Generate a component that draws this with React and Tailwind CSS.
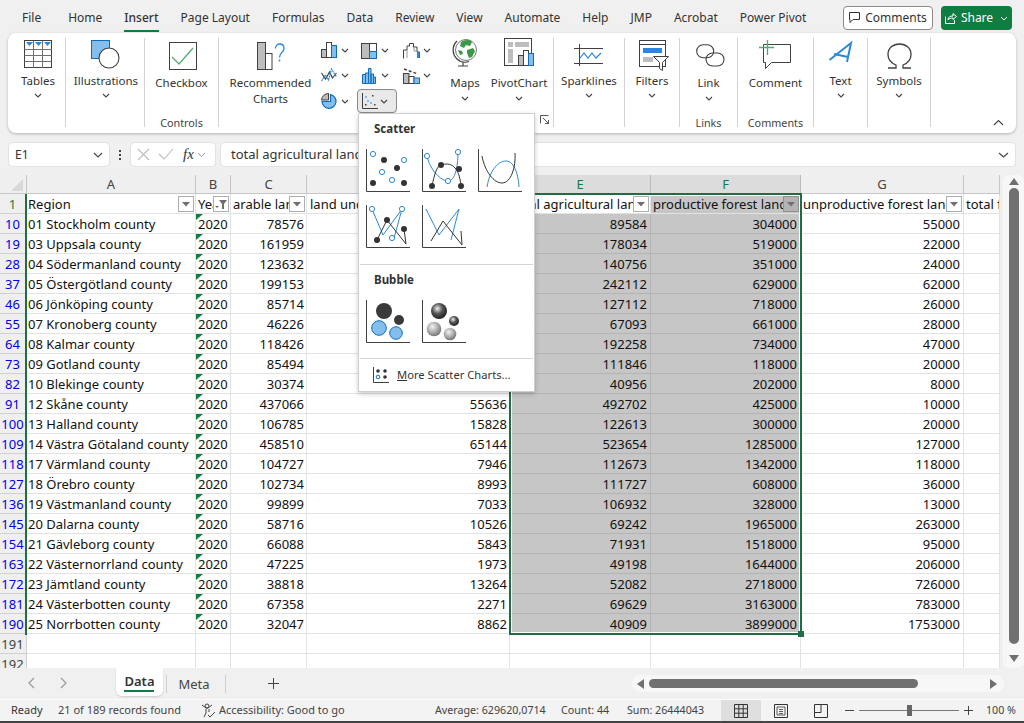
import React from "react";

const rows = [
  [10,"01 Stockholm county",78576,"",89584,304000,55000],
  [19,"03 Uppsala county",161959,"",178034,519000,22000],
  [28,"04 Södermanland county",123632,"",140756,351000,24000],
  [37,"05 Östergötland county",199153,"",242112,629000,62000],
  [46,"06 Jönköping county",85714,"",127112,718000,26000],
  [55,"07 Kronoberg county",46226,"",67093,661000,28000],
  [64,"08 Kalmar county",118426,"",192258,734000,47000],
  [73,"09 Gotland county",85494,"",111846,118000,20000],
  [82,"10 Blekinge county",30374,"",40956,202000,8000],
  [91,"12 Skåne county",437066,55636,492702,425000,10000],
  [100,"13 Halland county",106785,15828,122613,300000,20000],
  [109,"14 Västra Götaland county",458510,65144,523654,1285000,127000],
  [118,"17 Värmland county",104727,7946,112673,1342000,118000],
  [127,"18 Örebro county",102734,8993,111727,608000,36000],
  [136,"19 Västmanland county",99899,7033,106932,328000,13000],
  [145,"20 Dalarna county",58716,10526,69242,1965000,263000],
  [154,"21 Gävleborg county",66088,5843,71931,1518000,95000],
  [163,"22 Västernorrland county",47225,1973,49198,1644000,206000],
  [172,"23 Jämtland county",38818,13264,52082,2718000,726000],
  [181,"24 Västerbotten county",67358,2271,69629,3163000,783000],
  [190,"25 Norrbotten county",32047,8862,40909,3899000,1753000],
];

const Chev = ({ className = "" }) => (
  <svg width="8" height="5" viewBox="0 0 8 5" className={className}><path d="M1 1l3 3 3-3" fill="none" stroke="#444" strokeWidth="1.1" /></svg>
);

const D = "#404040", B = "#2b88d8", L = "#83beec", N = "#0f6cbd", G = "#bdbdbd";

const TablesIcon = () => (
  <svg width="29" height="29" viewBox="0 0 29 29">
    <rect x=".5" y=".5" width="27" height="27" fill="#fff" stroke={D} />
    <path d="M.5 9.5h27M.5 15.5h27M.5 21.5h27M9.5 1v27M18.5 1v27" stroke="#707070" fill="none" />
    <path d="M2 2h7L5.5 6zM11 2h7l-3.5 4zM20 2h7l-3.500 4z" fill={B} />
  </svg>
);
const IllusIcon = () => (
  <svg width="30" height="30" viewBox="0 0 30 30">
    <rect x=".5" y=".5" width="18" height="18" fill={L} stroke={N} />
    <circle cx="18" cy="18" r="10" fill="#fff" stroke={D} strokeWidth="1.100" />
  </svg>
);
const CheckIcon = () => (
  <svg width="29" height="29" viewBox="0 0 29 29">
    <rect x=".5" y=".5" width="27" height="27" fill="#fff" stroke={D} />
    <path d="M3 15l7 7L24 6" fill="none" stroke="#4caf6a" strokeWidth="1.200" />
  </svg>
);
const RecIcon = () => (
  <svg width="30" height="30" viewBox="0 0 30 30">
    <rect x=".5" y=".5" width="8" height="27" fill={G} stroke={D} />
    <rect x="8.500" y="11.500" width="6.500" height="16" fill="#fff" stroke={D} />
    <path d="M18.500 6.500c0-6 8.500-6 8.500 0 0 4-4.500 3.500-4.500 9" fill="none" stroke={B} strokeWidth="1.300" />
    <circle cx="22.500" cy="18.500" r="1" fill={B} />
  </svg>
);
const ColIcon = () => (
  <svg width="16" height="17" viewBox="0 0 16 17"><rect x=".5" y="7.500" width="5" height="8" fill={G} stroke={D} /><rect x="5.500" y=".5" width="5" height="15" fill="#fff" stroke={D} /><rect x="10.500" y="3.500" width="5" height="12" fill={L} stroke={N} /></svg>
);
const LineIcon = () => (
  <svg width="16" height="16" viewBox="0 0 16 16"><path d="M.5 5l4 6 4-7 3 6 4-5" fill="none" stroke={D} strokeWidth="1.200" /><path d="M.5 13l4-6 3 5 3-11 5 8" fill="none" stroke={B} strokeWidth="1.200" strokeDasharray="2 .6" /></svg>
);
const PieIcon = () => (
  <svg width="17" height="17" viewBox="0 0 17 17"><path d="M.5 7A7 7 0 0 1 7.500.5V7z" fill={G} stroke={D} /><path d="M9.500 1.500a7 7 0 1 1-8.500 7h8.500z" fill={L} stroke={N} strokeWidth="1.200" /></svg>
);
const TreeIcon = () => (
  <svg width="16" height="16" viewBox="0 0 16 16"><rect x=".5" y=".5" width="15" height="15" fill="#fff" stroke={D} /><rect x=".5" y=".5" width="8" height="15" fill={G} stroke={D} /><rect x="8.500" y="8.500" width="7" height="7" fill={L} stroke={N} /></svg>
);
const HistIcon = () => (
  <svg width="14" height="16" viewBox="0 0 14 16"><path d="M.5 15.500v-9h3v9zM3.500 15.500V5h3v10.500zM6.500 15.500V.5h2.500v15zM9 15.500V6h2.500v9.500zM11.500 15.500V9h2v6.500z" fill={L} stroke={N} /></svg>
);
const ScatterSmall = () => (
  <svg width="16" height="16" viewBox="0 0 16 16"><path d="M.5 0v15.500H16" fill="none" stroke={D} /><g fill={L}><rect x="3" y="3" width="2" height="2" /><rect x="5" y="7" width="2" height="2" /><rect x="8" y="9" width="2" height="2" /></g><g fill={D}><rect x="10" y="2" width="1.500" height="1.500" /><rect x="3" y="11" width="1.500" height="1.500" /><rect x="12" y="11" width="1.500" height="1.500" /></g></svg>
);
const WaterIcon = () => (
  <svg width="17" height="16" viewBox="0 0 17 16"><path d="M.5 15.500V7h3.500V3h2.500V.5h4V4H14v5h2.500v6" fill="none" stroke={D} /><path d="M4 15V7M11 4v4h3" fill="none" stroke="#999" /><rect x="14" y="9" width="2.500" height="6" fill={B} /></svg>
);
const BoxIcon = () => (
  <svg width="17" height="16" viewBox="0 0 17 16"><rect x=".5" y="5.500" width="5.500" height="10" fill={G} stroke={D} /><rect x="6" y="8.500" width="5" height="7" fill="#fff" stroke={D} /><rect x="11" y="10" width="5.500" height="5.500" fill={L} stroke={N} /><path d="M1 1l14 5" stroke={D} strokeDasharray="3 2" fill="none" strokeWidth="1.500" /></svg>
);
const GlobeIcon = () => (
  <svg width="27" height="29" viewBox="0 0 27 29">
    <circle cx="14" cy="12" r="10.500" fill="#fff" stroke="#777" />
    <path d="M9 4c3-2 8-3 11 0l-2 4-4-1-2 3-4-2zM15 12l6-2 2 3-3 6-3 1-2-5zM6 12l4 1 1 3-3 1z" fill="#3a9a48" />
    <path d="M5 3a12.500 12.500 0 0 0 0 18c3 3 8 4 12 2.500" fill="none" stroke={D} strokeWidth="1.300" />
    <path d="M11 24.500v3.500M6 28h10" stroke={D} strokeWidth="1.200" />
  </svg>
);
const PivotIcon = () => (
  <svg width="30" height="31" viewBox="0 0 30 31">
    <rect x=".5" y=".5" width="27" height="27" fill="#fff" stroke={D} />
    <rect x="4" y="4" width="5" height="5" fill={G} /><rect x="11" y="4" width="14" height="5" fill={G} />
    <rect x="4" y="11" width="5" height="14" fill={G} />
    <rect x="14.500" y="17.500" width="5" height="10" fill={G} stroke={D} />
    <rect x="19.500" y="12.500" width="5" height="15" fill="#fff" stroke={D} />
    <rect x="24.500" y="15.500" width="5" height="12" fill={L} stroke={N} />
  </svg>
);
const SparkIcon = () => (
  <svg width="29" height="22" viewBox="0 0 29 22">
    <path d="M0 4.500h29M0 19.500h29M5.500 0v22" stroke={D} fill="none" />
    <path d="M6 14l4-5 4 5 4-5 4 5 5-5" fill="none" stroke={B} strokeWidth="1.200" />
  </svg>
);
const FilterIcon = () => (
  <svg width="30" height="31" viewBox="0 0 30 31">
    <rect x=".5" y=".5" width="26" height="26" fill="#fff" stroke={D} />
    <path d="M0 4.500h27" stroke={D} />
    <rect x="4" y="8" width="19" height="5" fill={B} />
    <rect x="4" y="17" width="10" height="5" fill={G} />
    <path d="M14.500 16.500h15l-6 6v8l-3-2v-6z" fill="#fff" stroke={D} />
  </svg>
);
const LinkIcon = () => (
  <svg width="29" height="24" viewBox="0 0 29 24">
    <rect x=".7" y=".7" width="17" height="13" rx="6.500" fill="none" stroke={D} strokeWidth="1.100" />
    <rect x="10" y="9" width="18" height="13" rx="6.500" fill="none" stroke={D} strokeWidth="1.100" />
  </svg>
);
const CommentIcon = () => (
  <svg width="32" height="30" viewBox="0 0 32 30">
    <path d="M4.500 4.500h27v18H12.500l-6 6v-6h-2z" fill="#fff" stroke={D} />
    <path d="M8.500 0v15M0 7.500h15" stroke="#4caf6a" strokeWidth="1.300" />
  </svg>
);
const TextIcon = () => (
  <svg width="24" height="20" viewBox="0 0 24 20" className="overflow-visible">
    <path d="M.5 17L22 0l-4 19M5 11l14 3" fill="none" stroke={B} strokeWidth="2" />
  </svg>
);
const Omega = () => (
  <svg width="25" height="26" viewBox="0 0 25 26">
    <path d="M1 25h8v-3C4 20 1 16 1 11.500 1 5 6 1 12.500 1S24 5 24 11.500c0 4.500-3 8.500-8 10.500v3h8" fill="none" stroke={D} strokeWidth="1.300" />
  </svg>
);

const Big = ({ icon, label, pt = 0, il = 0, gap = 0, cls = "" }) => (
  <div className={`flex flex-col items-center ${cls}`}>
    <div className="flex h-[36px] items-start justify-center" style={{ paddingTop: pt, paddingLeft: il }}>{icon}</div>
    <div className="whitespace-nowrap text-center text-[11.500px] leading-[16px] text-[#333]" style={{ marginTop: gap }}>{label}</div>
  </div>
);

const Group = ({ w, label, children, last }) => (
  <div className={`relative flex h-[89px] shrink-0 flex-col ${last ? "" : "border-r border-[#d2d2d2]"}`} style={{ width: w }}>
    <div className="flex h-[78px] shrink-0 justify-center">{children}</div>
    {label && <div className="text-center text-[10.800px] leading-[14px] text-[#444]">{label}</div>}
  </div>
);

const SmallChart = ({ icon, sel }) => (
  <div className={`flex h-[24px] w-[40px] items-center justify-between rounded-[4px] pl-[3px] pr-[8px] ${sel ? "border border-[#8a8a8a] bg-[#e9e9e9]" : ""}`}>
    <div className="flex w-[18px] justify-center">{icon}</div>
    <Chev />
  </div>
);

const Axis = ({ children }) => (
  <svg width="44" height="44" viewBox="0 0 44 44">
    <path d="M.5 0v42.500H44" fill="none" stroke={D} strokeWidth="1" />
    {children}
  </svg>
);
const Open = ({ x, y }) => <circle cx={x} cy={y} r="2.600" fill="#fff" stroke={B} strokeWidth="1" />;
const Dot = ({ x, y }) => <circle cx={x} cy={y} r="3" fill="#333" />;

const ScatterA = () => (
  <Axis>
    <Open x={7} y={5} /><Open x={38} y={11} /><Open x={16} y={23} /><Open x={26} y={31} />
    <Dot x={18} y={11} /><Dot x={31} y={19} /><Dot x={7} y={34} /><Dot x={38} y={34} />
  </Axis>
);
const ScatterB = () => (
  <Axis>
    <path d="M5 7c3 14 14 25 21 25s10-14 10-29" fill="none" stroke={B} />
    <path d="M10 37c2-10 5-21 9-21 9-3 18 0 20 21" fill="none" stroke="#333" />
    <Open x={5} y={7} /><Open x={26} y={32} /><Open x={36} y={3} />
    <Dot x={10} y={37} /><Dot x={19} y={16} /><Dot x={37} y={20} /><Dot x={39} y={37} />
  </Axis>
);
const ScatterC = () => (
  <Axis>
    <path d="M9 38c3-18 12-26 19-26s12 10 13 26" fill="none" stroke={B} strokeWidth="1" />
    <path d="M4 7c3 16 12 27 20 27 9 0 14-16 13-30" fill="none" stroke="#333" strokeWidth="1" />
  </Axis>
);
const ScatterD = () => (
  <Axis>
    <path d="M6 4l11 26 19-26-8 29" fill="none" stroke={B} />
    <path d="M11 35l10-20 19 24-2-15" fill="none" stroke="#333" />
    <Open x={6} y={4} /><Open x={36} y={4} /><Open x={26} y={33} />
    <Dot x={11} y={35} /><Dot x={21} y={15} /><Dot x={38} y={24} />
  </Axis>
);
const ScatterE = () => (
  <Axis>
    <path d="M4 4l13 26L37 4l-8 31" fill="none" stroke={B} />
    <path d="M9 36l12-20 19 24-1-14" fill="none" stroke="#333" />
  </Axis>
);
const BubbleA = () => (
  <Axis>
    <circle cx="18" cy="11" r="8" fill="#3a3a3a" />
    <circle cx="33" cy="20" r="5" fill="#3a3a3a" />
    <circle cx="13" cy="28" r="7.300" fill={L} stroke={N} strokeWidth="1" />
    <circle cx="30" cy="33" r="6.300" fill={L} stroke={N} strokeWidth="1" />
  </Axis>
);
const BubbleB = () => (
  <Axis>
    <defs>
      <radialGradient id="gd" cx=".4" cy=".35" r=".65"><stop offset="0" stopColor="#eee" /><stop offset=".5" stopColor="#555" /><stop offset="1" stopColor="#222" /></radialGradient>
      <radialGradient id="gl" cx=".4" cy=".35" r=".65"><stop offset="0" stopColor="#f2f2f2" /><stop offset=".6" stopColor="#aaa" /><stop offset="1" stopColor="#777" /></radialGradient>
    </defs>
    <circle cx="17" cy="11" r="8" fill="url(#gd)" />
    <circle cx="32" cy="21" r="5" fill="url(#gd)" />
    <circle cx="12" cy="29" r="7.300" fill="url(#gl)" />
    <circle cx="28" cy="34" r="6.300" fill="url(#gl)" />
  </Axis>
);

const ScatterMenu = () => (
  <div className="absolute left-[358px] top-[113px] z-20 h-[279px] w-[177px] border border-[#cfcfcf] bg-white shadow-[0_2px_5px_rgba(0,0,0,0.2)]">
    <div className="pl-[15px] pt-[6px] text-[11.500px] font-bold leading-[18px] text-[#333]">Scatter</div>
    <div className="grid grid-cols-[44px_44px_44px] gap-x-[12px] gap-y-[12px] pl-[7px] pt-[11px]">
      <ScatterA /><ScatterB /><ScatterC /><ScatterD /><ScatterE />
    </div>
    <div className="mx-[1px] mt-[15px] h-px bg-[#d4d4d4]" />
    <div className="pl-[15px] pt-[6px] text-[11.500px] font-bold leading-[18px] text-[#333]">Bubble</div>
    <div className="flex gap-[12px] pl-[7px] pt-[11px]">
      <BubbleA /><BubbleB />
    </div>
    <div className="mx-[1px] mt-[14px] h-px bg-[#d4d4d4]" />
    <div className="flex items-center gap-[8px] pl-[14px] pt-[6px] text-[11.200px] leading-[20px] text-[#333]">
      <svg width="16" height="16" viewBox="0 0 16 16"><path d="M.5 0v15.500H16" fill="none" stroke={D} /><circle cx="5" cy="4" r="1.800" fill="#333" /><circle cx="12" cy="4" r="1.800" fill="#333" /><circle cx="5" cy="10" r="1.800" fill="none" stroke={N} /><circle cx="12" cy="10" r="1.800" fill="#333" /></svg>
      <span><span className="underline">M</span>ore Scatter Charts...</span>
    </div>
  </div>
);

const FilterBtn = ({ dark, funnel }) => (
  <div className={`absolute right-[1px] top-[2px] flex h-[16px] w-[16px] items-center justify-center border ${dark ? "border-[#8f8f8f] bg-[#b3b3b3]" : "border-[#a9aeb5] bg-white"}`}>
    {funnel ? (
      <svg width="14" height="14" viewBox="0 0 14 14"><path d="M5 3h8L10 7v5H8V7z" fill="#6f6f6f" /><path d="M1 9h4l-2 2z" fill="#6f6f6f" /></svg>
    ) : (
      <svg width="8" height="5" viewBox="0 0 8 5"><path d="M0 0h8L4 4.500z" fill="#707070" /></svg>
    )}
  </div>
);

const cols = "grid grid-cols-[27px_169px_35px_76px_203px_141px_150px_163px_36px]";
const cell = "relative h-[20px] overflow-hidden whitespace-nowrap border-b border-r border-[#e2e2e2] text-[13px] leading-[20px] text-[#111]";
const sel = "relative h-[20px] overflow-hidden whitespace-nowrap border-b border-r border-[#b4b4b4] bg-[#c6c6c6] text-[13px] leading-[20px] text-[#111] text-right pr-[3px]";
const rowHead = "h-[20px] overflow-hidden border-b border-r border-[#d0d0d0] bg-[#efefef] pr-[1px] text-center text-[13px] leading-[20px]";
const colHead = "h-[19px] border-r border-b border-[#c6c6c6] bg-[#efefef] text-center text-[13px] leading-[19px] text-[#444]";
const colHeadSel = "h-[19px] border-r border-b border-[#bbb] bg-[#dcdcdc] text-center text-[13px] leading-[19px] text-[#107c41]";

const Sheet = () => (
  <div className="relative mt-[8px] h-[493px] w-[1000px] overflow-hidden bg-white">
    <div className={cols}>
      <div className="relative h-[19px] border-b border-r border-[#c6c6c6] bg-[#efefef]">
        <svg width="12" height="12" viewBox="0 0 12 12" className="absolute bottom-[2px] right-[3px]"><path d="M12 0v12H0z" fill="#d9d9d9" /></svg>
      </div>
      {["A","B","C","D"].map((c) => <div key={c} className={colHead}>{c}</div>)}
      <div className={colHeadSel}>E</div>
      <div className={colHeadSel}>F</div>
      <div className={colHead}>G</div>
      <div className={colHead}></div>
    </div>
    <div className={cols}>
      <div className={`${rowHead} bg-[#dcdcdc] text-[#107c41]`}>1</div>
      <div className={`${cell} pl-[1px]`}>Region<FilterBtn /></div>
      <div className={`${cell} pl-[2px]`}>Year<FilterBtn funnel /></div>
      <div className={`${cell} pl-[2px]`}>arable land<FilterBtn /></div>
      <div className={`${cell} pl-[3px]`}>land under</div>
      <div className={`${cell} pl-[2px]`}>total agricultural land<FilterBtn /></div>
      <div className={`${cell} border-[#b4b4b4] bg-[#c6c6c6] pl-[2px]`}>productive forest land<FilterBtn dark /></div>
      <div className={`${cell} pl-[2px]`}>unproductive forest land<FilterBtn /></div>
      <div className={`${cell} pl-[2px]`}>total forest</div>
    </div>
    {rows.map((r) => (
      <div key={r[0]} className={cols}>
        <div className={`${rowHead} text-[#0000e6]`}>{r[0]}</div>
        <div className={`${cell} pl-[1px]`}>{r[1]}</div>
        <div className={`${cell} pl-[2px]`}>
          <svg width="7" height="6" viewBox="0 0 7 6" className="absolute left-0 top-0"><path d="M0 0h7L0 6z" fill="#107c41" /></svg>
          2020
        </div>
        <div className={`${cell} pr-[2px] text-right`}>{r[2]}</div>
        <div className={`${cell} pr-[2px] text-right`}>{r[3]}</div>
        <div className={sel}>{r[4]}</div>
        <div className={sel}>{r[5]}</div>
        <div className={`${cell} pr-[3px] text-right`}>{r[6]}</div>
        <div className={cell}></div>
      </div>
    ))}
    {[191,192].map((n) => (
      <div key={n} className={cols}>
        <div className={`${rowHead} text-[#444]`}>{n}</div>
        {[0,1,2,3,4,5,6,7].map((i) => <div key={i} className={cell}></div>)}
      </div>
    ))}
    <div className="pointer-events-none absolute left-[509px] top-[18px] h-[442px] w-[293px] border-2 border-[#1e6e42] shadow-[inset_0_0_0_1px_#fff]" />
    <div className="absolute left-[798px] top-[456px] h-[6px] w-[6px] bg-[#1e6e42]" />
    <div className="absolute left-[25px] top-[19px] h-[441px] w-[2px] bg-[#1e6e42]" />
  </div>
);

const VScroll = () => (
  <div className="ml-[3px] mt-[8px] flex h-[493px] w-[21px] flex-col items-center rounded-[6px] bg-[#f7f7f7] pt-[3px]">
    <svg width="10" height="7" viewBox="0 0 10 7"><path d="M0 7h10L5 0z" fill="#707070" /></svg>
    <div className="mt-[3px] h-[456px] w-[10px] rounded-[5px] bg-[#707070]" />
    <svg width="10" height="7" viewBox="0 0 10 7" className="mt-[11px]"><path d="M0 0h10L5 7z" fill="#707070" /></svg>
  </div>
);

const SheetTabs = () => (
  <div className="flex h-[31px] items-start">
    <div className="flex w-[116px] items-center pl-[27px] pt-[9px]">
      <svg width="8" height="12" viewBox="0 0 8 12"><path d="M7 1L2 6l5 5" fill="none" stroke="#9a9a9a" strokeWidth="1.200" /></svg>
      <svg width="8" height="12" viewBox="0 0 8 12" className="ml-[25px]"><path d="M1 1l5 5-5 5" fill="none" stroke="#9a9a9a" strokeWidth="1.200" /></svg>
    </div>
    <div className="relative flex h-[28px] w-[47px] justify-center rounded-b-[6px] bg-white text-[13px] font-semibold leading-[26px] text-[#333] shadow-[0_1px_2px_rgba(0,0,0,0.15)]">
      Data
      <div className="absolute bottom-[4px] left-[8px] h-[2px] w-[30px] bg-[#107c41]" />
    </div>
    <div className="ml-[3px] mt-[7px] h-[18px] w-px bg-[#cfcfcf]" />
    <div className="w-[58px] pr-[4px] pt-[4px] text-center text-[13px] leading-[24px] text-[#444]">Meta</div>
    <div className="mt-[7px] h-[18px] w-px bg-[#cfcfcf]" />
    <svg width="11" height="11" viewBox="0 0 11 11" className="ml-[42px] mt-[10px]"><path d="M5.500 0v11M0 5.500h11" stroke="#444" strokeWidth="1" /></svg>
    <div className="ml-auto mr-[20px] mt-[7px] flex h-[17px] w-[372px] items-center rounded-[8px] bg-[#f7f7f7] pl-[5px] pr-[3px]">
      <svg width="7" height="10" viewBox="0 0 7 10"><path d="M7 0v10L0 5z" fill="#707070" /></svg>
      <div className="ml-[5px] h-[9px] w-[269px] rounded-[5px] bg-[#707070]" />
      <svg width="7" height="10" viewBox="0 0 7 10" className="ml-auto mr-[4px]"><path d="M0 0v10l7-5z" fill="#707070" /></svg>
    </div>
  </div>
);

const StatusBar = () => (
  <div className="flex h-[22px] items-center border-t border-[#fafafa] bg-[#f3f3f3] text-[10.700px] text-[#444]">
    <span className="ml-[11px] w-[47px] text-[11px] text-[#333]">Ready</span>
    <span className="w-[143px] text-[11px]">21 of 189 records found</span>
    <svg width="17" height="16" viewBox="0 0 17 16" className="mr-[1px]"><circle cx="6" cy="3" r="2" fill="none" stroke="#444" /><path d="M1 2l4 3h2l4-3M5 6v4l-2 4M8 6v3M7 12l2 2 5-5" fill="none" stroke="#444" /></svg>
    <span className="w-[216px] text-[11px]">Accessibility: Good to go</span>
    <span className="w-[126px]">Average: 629620,0714</span>
    <span className="w-[66px]">Count: 44</span>
    <span className="w-[94px]">Sum: 26444043</span>
    <div className="flex h-[21px] w-[40px] items-center justify-center bg-[#dedede]">
      <svg width="14" height="14" viewBox="0 0 14 14"><path d="M.5.500h13v13H.5zM.5 4.800h13M.5 9.200h13M4.800.500v13M9.200.500v13" fill="none" stroke="#333" /></svg>
    </div>
    <div className="flex w-[40px] justify-center">
      <svg width="14" height="14" viewBox="0 0 14 14"><path d="M.5.500h13v13H.5z" fill="none" stroke="#333" /><path d="M3 3h8v8H3zM5 5.500h4M5 7.500h4M5 9.500h4" fill="none" stroke="#333" strokeWidth=".8" /></svg>
    </div>
    <div className="flex w-[40px] justify-center">
      <svg width="14" height="14" viewBox="0 0 14 14"><path d="M.5.500h13v13H.5zM.5 8.500h6.500V.5" fill="none" stroke="#333" /></svg>
    </div>
    <span className="ml-[4px] h-px w-[9px] bg-[#444]" />
    <div className="relative ml-[5px] h-px w-[100px] bg-[#777]">
      <div className="absolute left-[48px] top-[-5px] h-[11px] w-[5px] bg-[#666]" />
    </div>
    <svg width="9" height="9" viewBox="0 0 9 9" className="ml-[5px]"><path d="M4.500 0v9M0 4.500h9" stroke="#444" /></svg>
    <span className="ml-[13px]">100 %</span>
  </div>
);

const tabs = ["Home","Insert","Page Layout","Formulas","Data","Review","View","Automate","Help","JMP","Acrobat","Power Pivot"];

export default function App() {
  return (
    <div className="relative flex h-[723px] w-[1024px] flex-col overflow-hidden bg-[#f0f0f0] [font-family:'Noto_Sans',sans-serif]">
      <div className="flex h-[33px] items-start">
        <div className="flex h-[33px] items-center pl-[22px] pt-[3px] text-[12px] text-[#333]">
          <span className="mr-[27px]">File</span>
          <div className="flex gap-[22px]">
            {tabs.map((t) => (
              <span key={t} className={`relative ${t === "Insert" ? "font-medium" : ""}`}>
                {t}
                {t === "Insert" && <span className="absolute bottom-[-5px] left-0 h-[2px] w-full bg-[#107c41]" />}
              </span>
            ))}
          </div>
        </div>
        <div className="ml-auto mr-[12px] mt-[6px] flex gap-[8px]">
          <div className="flex h-[24px] w-[90px] items-center justify-center gap-[5px] rounded-[4px] border border-[#8a8a8a] bg-white text-[12px] text-[#333]">
            <svg width="11" height="12" viewBox="0 0 11 12"><path d="M.5.500h10v7H4l-3 3v-3H.5z" fill="none" stroke="#333" /></svg>
            Comments
          </div>
          <div className="flex h-[24px] w-[71px] items-center justify-center gap-[4px] rounded-[4px] bg-[#107c41] text-[12px] text-white">
            <svg width="12" height="12" viewBox="0 0 12 12"><path d="M.5 4.500v7h9V8M3 8c0-3 2-4 5-4V1.500l3.500 3L8 7.500V6C6 6 4 6.500 3 8z" fill="none" stroke="#fff" /></svg>
            Share
            <svg width="8" height="5" viewBox="0 0 8 5" className="ml-[3px]"><path d="M1 1l3 3 3-3" fill="none" stroke="#fff" /></svg>
          </div>
        </div>
      </div>

      <div className="relative mx-[8px] flex h-[100px] rounded-[8px] bg-white pt-[5px] shadow-[0_1px_3px_rgba(0,0,0,0.25)]">
        <Group w={58}><Big cls="pl-[3px]" pt={2} icon={<TablesIcon />} gap={-1} label={<>Tables<Chev className="mx-auto mt-[4px]" /></>} /></Group>
        <Group w={79}><Big cls="pl-[2px]" pt={2} il={1} icon={<IllusIcon />} gap={-1} label={<>Illustrations<Chev className="mx-auto mt-[4px]" /></>} /></Group>
        <Group w={74} label="Controls"><Big pt={4} il={3} icon={<CheckIcon />} gap={1} label="Checkbox" /></Group>
        <Group w={335}>
          <div className="flex w-full pl-[11px]">
            <Big pt={4} il={2} cls="w-[81px]" gap={1} icon={<RecIcon />} label={<>Recommended<br />Charts</>} />
            <div className="ml-[6px] grid h-[76px] grid-cols-[40px_42px_40px] grid-rows-[25px_25px_26px] items-center">
              <SmallChart icon={<ColIcon />} /><SmallChart icon={<TreeIcon />} /><SmallChart icon={<WaterIcon />} />
              <SmallChart icon={<LineIcon />} /><SmallChart icon={<HistIcon />} /><SmallChart icon={<BoxIcon />} />
              <SmallChart icon={<PieIcon />} /><SmallChart sel icon={<ScatterSmall />} />
            </div>
            <Big pt={0} cls="ml-[1px] w-[50px]" gap={1} icon={<GlobeIcon />} label={<>Maps<Chev className="mx-auto mt-[5px]" /></>} />
            <Big pt={0} cls="ml-[-2px] w-[62px]" gap={1} icon={<PivotIcon />} label={<>PivotChart<Chev className="mx-auto mt-[5px]" /></>} />
          </div>
          <svg width="10" height="10" viewBox="0 0 10 10" className="absolute bottom-[2px] right-[3px]"><path d="M.5.500h8M.500.500v8M3 3l5.500 5.500M5 8.500h3.500V5" fill="none" stroke="#555" /></svg>
        </Group>
        <Group w={71}><Big pt={6} icon={<SparkIcon />} gap={-1} label={<>Sparklines<Chev className="mx-auto mt-[4px]" /></>} /></Group>
        <Group w={55}><Big pt={2} il={4} icon={<FilterIcon />} gap={-1} label={<>Filters<Chev className="mx-auto mt-[4px]" /></>} /></Group>
        <Group w={58} label="Links"><Big pt={6} il={3} icon={<LinkIcon />} gap={1} label={<>Link<Chev className="mx-auto mt-[5px]" /></>} /></Group>
        <Group w={76} label="Comments"><Big pt={2} icon={<CommentIcon />} gap={1} label="Comment" /></Group>
        <Group w={54}><Big pt={5} icon={<TextIcon />} gap={-1} label={<>Text<Chev className="mx-auto mt-[4px]" /></>} /></Group>
        <Group w={63}><Big pt={5} icon={<Omega />} gap={-1} label={<>Symbols<Chev className="mx-auto mt-[4px]" /></>} /></Group>
        <svg width="11" height="7" viewBox="0 0 11 7" className="absolute bottom-[7px] right-[12px]"><path d="M1 6l4.500-4.500L10 6" fill="none" stroke="#444" strokeWidth="1.100" /></svg>
      </div>

      <div className="mx-[8px] mt-[9px] flex h-[25px] items-center">
        <div className="flex h-[25px] w-[102px] items-center justify-between rounded-[5px] border border-[#e2e2e2] bg-white pl-[6px] pr-[6px] pt-[1px] text-[12px] text-[#333]">
          E1
          <svg width="10" height="6" viewBox="0 0 10 6"><path d="M1 1l4 4 4-4" fill="none" stroke="#444" strokeWidth="1.100" /></svg>
        </div>
        <div className="ml-[9px] flex w-[3px] flex-col gap-[2px]">
          <span className="h-[2px] w-[2px] bg-[#444]" /><span className="h-[2px] w-[2px] bg-[#444]" /><span className="h-[2px] w-[2px] bg-[#444]" />
        </div>
        <div className="ml-[8px] flex h-[25px] w-[86px] items-center rounded-[5px] border border-[#e2e2e2] bg-white pl-[6px]">
          <svg width="13" height="13" viewBox="0 0 13 13"><path d="M1 1l11 11M12 1L1 12" stroke="#bdbdbd" strokeWidth="1.100" /></svg>
          <svg width="16" height="13" viewBox="0 0 16 13" className="ml-[8px]"><path d="M1 6l5 5L15 1" fill="none" stroke="#bdbdbd" strokeWidth="1.100" /></svg>
          <span className="ml-[9px] [font-family:'Liberation_Serif',serif] text-[15px] italic text-[#333]">fx</span>
          <svg width="9" height="6" viewBox="0 0 9 6" className="ml-[3px]"><path d="M1 1l3.500 3.500L8 1" fill="none" stroke="#999" /></svg>
        </div>
        <div className="ml-[4px] flex h-[25px] flex-1 items-center justify-between rounded-[5px] border border-[#e2e2e2] bg-white pl-[10px] pr-[6px] pt-[1px] text-[13px] text-[#333]">
          total agricultural land
          <svg width="11" height="6" viewBox="0 0 11 6"><path d="M1 1l4.500 4L10 1" fill="none" stroke="#444" strokeWidth="1.100" /></svg>
        </div>
      </div>

      <div className="flex">
        <Sheet />
        <VScroll />
      </div>
      <SheetTabs />
      <StatusBar />
      <div className="flex-1 bg-[#444]" />
      <ScatterMenu />
    </div>
  );
}
